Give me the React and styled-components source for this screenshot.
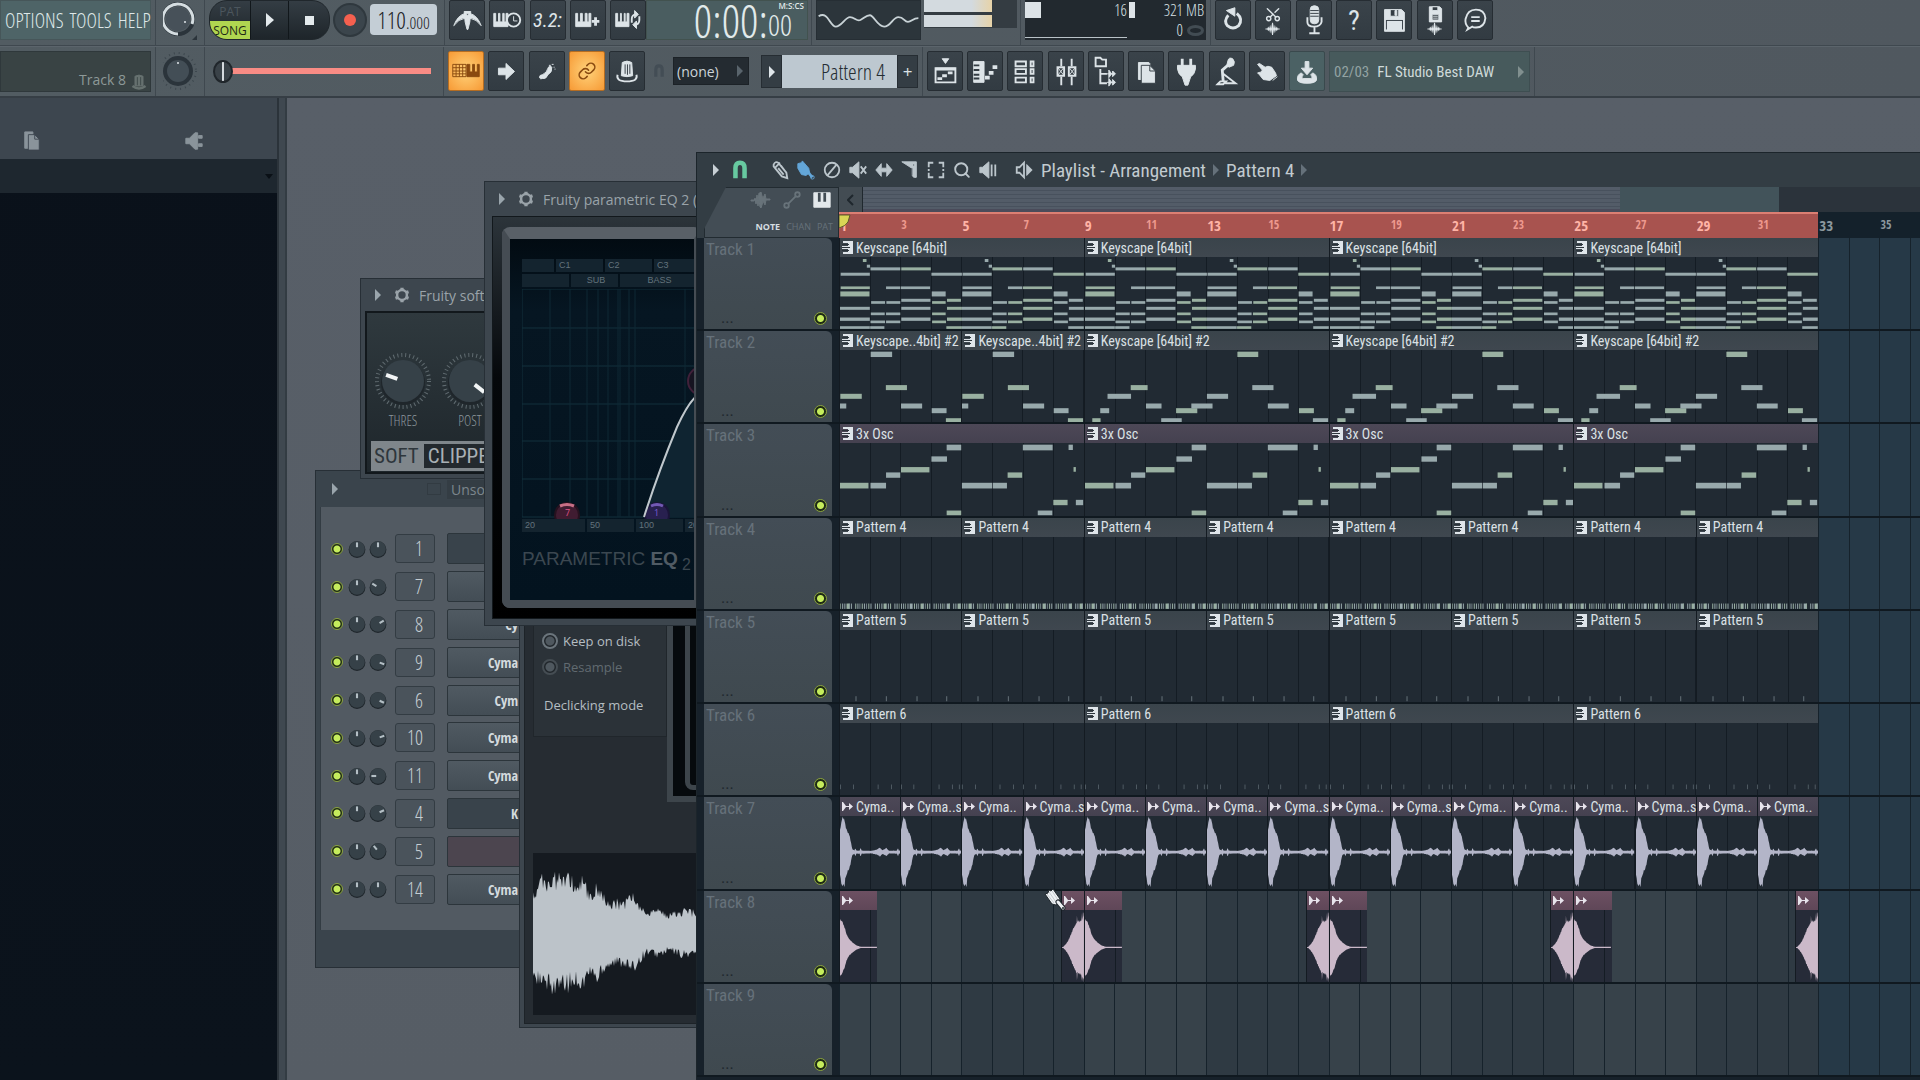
import styled, { createGlobalStyle, css } from "styled-components"
import { Link, Scissors, Search } from "lucide-react"

const LIGHT = `"Open Sans Condensed Light", "Roboto Condensed", "Open Sans Condensed", sans-serif`
const CONDENSED = `"Noto Sans Condensed", "Roboto Condensed", "Open Sans Condensed", sans-serif`
const BOLD = `"Open Sans Condensed", "Noto Sans", sans-serif`
const SANS = `"Open Sans", "Noto Sans", sans-serif`

/* ---------- data ---------- */

// notes are [x, y, width, height], one bar is 92 units wide and a clip is 216 high
const chords = [
    [69, 6, 11, 9], [81, 23, 10, 9],
    [92, 31, 90, 9], [185, 31, 89, 9],
    [2, 47, 88, 9], [276, 47, 92, 9],
    [2, 88, 88, 8], [139, 88, 43, 8], [184, 88, 88, 8],
    [1, 103, 88, 15], [277, 103, 42, 15],
    [185, 125, 88, 9], [323, 125, 42, 9],
    [94, 132, 42, 8], [140, 132, 42, 8], [278, 132, 41, 8],
    [0, 149, 90, 9], [185, 149, 88, 9], [323, 149, 45, 9],
    [93, 166, 42, 8], [139, 166, 43, 8], [278, 166, 41, 8],
    [0, 181, 90, 10], [185, 181, 88, 10], [323, 181, 45, 10],
    [92, 190, 44, 8], [139, 190, 43, 8], [278, 190, 42, 8],
    [0, 207, 90, 8], [91, 207, 43, 8], [321, 207, 47, 8],
]
const shift = (notes, by) => notes.map(([x, y, w, h]) => [x + by, y, w, h])
const chords8 = [...chords, ...shift(chords, 368)]

const melody = [
    [1, 131, 65, 15], [0, 160, 19, 15], [93, 5, 65, 16], [139, 105, 64, 15],
    [185, 160, 64, 15], [278, 174, 45, 15], [321, 204, 46, 12],
]
const melody8 = [
    [22, 204, 25, 12], [46, 174, 27, 15], [68, 131, 71, 15], [138, 105, 51, 15],
    [184, 160, 47, 15], [230, 204, 62, 12], [275, 174, 64, 15], [321, 160, 64, 15],
    [368, 131, 64, 15], [460, 5, 63, 16], [505, 105, 64, 15], [552, 160, 63, 15],
    [646, 174, 45, 15], [688, 204, 46, 12],
]
const bass8 = [
    [0, 119, 86, 17], [92, 119, 47, 17], [139, 88, 43, 16], [184, 72, 86, 16],
    [276, 40, 47, 16], [322, 5, 44, 17], [322, 202, 44, 14],
    [368, 119, 91, 17], [461, 119, 43, 17], [506, 88, 44, 16], [552, 5, 90, 17],
    [597, 202, 44, 14], [644, 170, 43, 16], [712, 170, 22, 16], [690, 5, 13, 16], [705, 72, 7, 14],
]
const hats = Array.from({ length: 56 }, (_, i) => [
    i * 6.6, 199, i % 17 === 3 || i % 17 === 15 ? 9 : i % 3 === 0 ? 2 : 3, 16,
]).filter((_, i) => i % 9 !== 6)
const claps = [47, 139, 232, 322].map((x) => [x, 198, 3, 15])
const kicks = [0, 40, 114, 155, 185, 222, 298, 338, 359].map((x) => [x, 184, 2, 14])
const kicks8 = [...kicks, ...shift(kicks, 368)]

const repeat = (count, make) => Array.from({ length: count }, (_, i) => make(i))
const longNames = [1, 3, 7, 9, 13]

const tracks = [
    { name: "Track 1", clips: repeat(4, (i) => ({ start: i * 8, bars: 8, label: "Keyscape [64bit]", notes: chords8 })) },
    {
        name: "Track 2",
        clips: [
            { start: 0, bars: 4, label: "Keyscape..4bit] #2", notes: melody },
            { start: 4, bars: 4, label: "Keyscape..4bit] #2", notes: melody },
            ...repeat(3, (i) => ({ start: 8 + i * 8, bars: 8, label: "Keyscape [64bit] #2", notes: melody8 })),
        ],
    },
    { name: "Track 3", clips: repeat(4, (i) => ({ start: i * 8, bars: 8, label: "3x Osc", tone: "violet", notes: bass8 })) },
    { name: "Track 4", clips: repeat(8, (i) => ({ start: i * 4, bars: 4, label: "Pattern 4", notes: hats })) },
    { name: "Track 5", clips: repeat(8, (i) => ({ start: i * 4, bars: 4, label: "Pattern 5", dim: true, notes: claps })) },
    { name: "Track 6", clips: repeat(4, (i) => ({ start: i * 8, bars: 8, label: "Pattern 6", dim: true, notes: kicks8 })) },
    {
        name: "Track 7",
        clips: repeat(16, (i) => ({ start: i * 2, bars: 2, label: longNames.includes(i) ? "Cyma..s" : "Cyma..", tone: "violet", wave: "kick" })),
    },
    {
        name: "Track 8",
        clips: [
            { start: 0, bars: 1.25, tone: "rose", wave: "fall" },
            ...[8, 16, 24].flatMap((bar) => [
                { start: bar - 0.75, bars: 0.75, tone: "rose", wave: "rise" },
                { start: bar, bars: 1.25, tone: "rose", wave: "fall" },
            ]),
            { start: 31.25, bars: 0.75, tone: "rose", wave: "rise" },
        ],
    },
    { name: "Track 9", clips: [] },
]

const channels = [
    { no: 1, pan: 0, name: "", tone: "#39434b" },
    { no: 7, pan: -60, name: "" },
    { no: 8, pan: 60, name: "Cy" },
    { no: 9, pan: 110, name: "Cyma" },
    { no: 6, pan: 115, name: "Cym" },
    { no: 10, pan: 70, name: "Cyma" },
    { no: 11, pan: -90, name: "Cyma" },
    { no: 4, pan: 65, name: "K", tone: "#39434b" },
    { no: 5, pan: -40, name: "", tone: "#4c454f" },
    { no: 14, pan: 0, name: "Cyma" },
]

/* ---------- wave forms ---------- */

// cheap repeatable noise, 0..1
const noise = (i) => {
    const n = Math.sin(i * 127.1) * 43758.5453
    return n - Math.floor(n)
}
const level = (points, x) => {
    const i = points.findIndex((p) => p[0] >= x)
    if (i <= 0) return points[0][1]
    const [x0, y0] = points[i - 1]
    const [x1, y1] = points[i]
    return y0 + ((y1 - y0) * (x - x0)) / (x1 - x0)
}
const wavePath = (points, middle, rough, step = 2) => {
    const end = points[points.length - 1][0]
    const top = []
    const bottom = []
    for (let x = 0; x <= end; x += step) {
        const l = level(points, x)
        top.push(`${x},${(middle - l * (1 - rough * noise(x + 1))).toFixed(1)}`)
        bottom.unshift(`${x},${(middle + l * (1 - rough * noise(x + 50))).toFixed(1)}`)
    }
    return `M${top.join("L")}L${bottom.join("L")}Z`
}

const waves = {
    kick: wavePath([[0, 70], [4, 96], [8, 110], [14, 108], [17, 84], [22, 64], [29, 54], [33, 34], [37, 10], [44, 5], [47, 14], [50, 5], [60, 5], [63, 16], [66, 5], [96, 4], [112, 8], [122, 14], [130, 6], [142, 13], [150, 4], [174, 5], [177, 14], [180, 5], [184, 5]], 108, 0.15),
    fall: wavePath([[0, 88], [8, 78], [16, 58], [20, 40], [28, 26], [38, 16], [50, 7], [64, 2], [115, 2]], 112, 0.08),
    rise: wavePath([[0, 1], [4, 2], [10, 8], [20, 22], [30, 46], [38, 64], [45, 78], [46, 78], [47, 100], [49, 80], [58, 86], [61, 88], [63, 108], [65, 92], [69, 108]], 112, 0.12, 1),
    sample: wavePath([[0, 46], [8, 60], [28, 64], [40, 58], [44, 54], [49, 62], [55, 48], [62, 46], [64, 62], [67, 44], [76, 36], [92, 34], [99, 44], [106, 32], [114, 22], [126, 26], [136, 20], [150, 26], [164, 23]], 80, 0.35, 1),
}

/* ---------- icons ---------- */

const Keys = ({ x, w = 16 }) => (
    <path d={`M${x} 13h2v9h3v-9h${w / 2 - 6}v9h3v-9h${w / 2 - 6}v9h2v-9h2v14h-${w}z`} fill="currentColor" />
)
const WaveMark = ({ y }) => (
    <path d={`M10 ${y}h2l1-2 1 2 1-4 1 4 1-6h1l1 6 1-4 1 4 1-2 1 2h2v1h-2l-1 2-1-2-1 4-1-4-1 6h-1l-1-6-1 4-1-4-1 2-1-2h-2z`} fill="currentColor" strokeWidth="0" />
)

const icons = {
    metronome: <><path d="M15 11h7l-1 11-2 8h-1l-2-8z" fill="currentColor" /><path d="M16 13Q8 15 4 26q5-7 12-8zM21 13q8 2 12 13-5-7-12-8z" fill="currentColor" /><circle cx="18.500" cy="14" r="1" fill="#333c43" /></>,
    wait: <><Keys x={4} w={15} /><circle cx="25" cy="20" r="7" fill="#333c43" stroke="currentColor" strokeWidth="2" /><path d="M25 16v5h4" /></>,
    overlay: <><Keys x={5} /><path d="M26 17v9M22 21.500h8" strokeWidth="3" /></>,
    loop: <><Keys x={5} w={14} /><path d="M22 23v-4q0-5 5-5M30 16v4q0 5-5 5" strokeWidth="2" /><path d="M25 10l4 4-4 4zM27 21l-4 4 4 4z" fill="currentColor" /></>,
    typing: <><path d="M4 13h14v13H4z" /><path d="M4 16.500h14M4 20h14M4 23h14M7.500 13v13M11 13v13M14.500 13v13" strokeWidth="1" /><path d="M19 13h3v8h3v-8h2v8h3v-8h2v13H19z" fill="currentColor" /></>,
    arrow: <path d="M10 17h8v-5l9 8.500-9 8.500v-5h-8z" fill="currentColor" />,
    foot: <path d="M10 27q0-3 3-3 5-2 6-7 2-4 4-1 1 5-4 8-2 5-6 4-2 1-3-1zM20 14h2M23 13h2M25 16h1M26 18h1" fill="currentColor" />,
    link: <Link x="8" y="10" width="20" height="20" strokeWidth={2} />,
    hat: <><path d="M13 11q5-3 10 0l1 14q-6 2-12 0z" fill="currentColor" /><path d="M16 13v10M18.500 13v11M21 13v10" stroke="#333c43" /><path d="M8 24q-2 7 10 7t10-7" strokeWidth="2" /></>,
    undo: <><path d="M13 15q-5 6-1 11 6 5 12 0 5-7-2-13" strokeWidth="3" /><path d="M11 10l9-3v9z" fill="currentColor" /></>,
    cut: <><Scissors x="9" y="5" width="18" height="18" transform="rotate(-90 18 14)" strokeWidth={2} /><WaveMark y={29} /></>,
    mic: <><rect x="14" y="5" width="9" height="19" rx="4" fill="currentColor" /><path d="M14 10h9M14 13h9M14 16h9" stroke="#333c43" /><path d="M11 17v5q0 5 7 5t8-5v-5M18.500 27v6M13 34h11" strokeWidth="2" /></>,
    save: <><path d="M8 9h18l3 3v20H8z" fill="currentColor" /><path d="M14 9h9v7h-9z" fill="#333c43" /><path d="M19 10h2v5h-2z" fill="currentColor" /><path d="M10 20v10M27 20v10M10 20.500h17" stroke="#333c43" /></>,
    saveAs: <><path d="M12 6h11l2 2v14H12z" fill="currentColor" /><path d="M15 6h6v4h-6zM15 14h7v6h-7z" fill="#333c43" /><path d="M16 16h5M16 18h5" /><WaveMark y={29} /></>,
    chat: <><path d="M11 28q-4-4-3-9 2-10 11-10t10 9q-1 10-10 10-3 0-4-1l-5 3z" strokeWidth="2" /><path d="M14 17h9M14 21h9" strokeWidth="2" /></>,
    playlist: <><path d="M15 7h7l-3.500 5z" fill="currentColor" /><path d="M8 17h21v15H8z" strokeWidth="2" /><path d="M8 18h21" strokeWidth="3" /><path d="M10 28h5M15 25h5M21 22h5" strokeWidth="3" /></>,
    pianoRoll: <><path d="M6 10h11v22H6z" fill="currentColor" /><path d="M6 14h6M6 19h6M6 24h6M6 28h6" stroke="#333c43" strokeWidth="2" /><path d="M18 27h5M22 22h5M26 16h5" strokeWidth="4" /></>,
    rack: <path d="M8 10h11v5H8zM8 18h11v5H8zM8 27h11v5H8zM24 10h3v5h-3zM24 18h3v5h-3zM24 27h3v5h-3z" strokeWidth="2" />,
    mixer: <><path d="M13 7v8M13 26v9M24 7v8M24 26v9" strokeWidth="2" /><path d="M9 16h7v9H9zM21 16h7v9h-7z" strokeWidth="2" /><path d="M9 16l7 9M16 16l-7 9M21 16l7 9M28 16l-7 9" /></>,
    browser: <><path d="M7 15V6h5l2 2h4v7zM12 18v15h7M12 23h7" strokeWidth="2" /><path d="M19 23h8M19 32h8" /><path d="M21 19l3 4-3 4zM25 20l3 3-3 3zM21 28l3 4-3 4zM25 29l3 3-3 3z" fill="currentColor" /></>,
    pages: <><path d="M10 11h11l1 1v17H10z" fill="currentColor" /><path d="M13 14h9l6 6v13H13z" fill="currentColor" stroke="#333c43" /><path d="M22 14v6h6" stroke="#333c43" /></>,
    plug: <><path d="M14 7v8M23 7v8" strokeWidth="3" /><path d="M9 14h19v4q-1 6-5 8l-1 3-2 6h-3l-2-6-1-3q-4-2-5-8z" fill="currentColor" /></>,
    arm: <><path d="M20 13l-7 6 1 12" strokeWidth="3" /><path d="M19 9q1-4 5-2 3 3 1 7l-5 2-2-3z" fill="currentColor" /><path d="M8 34l3-3h6l-3 3zM14 23l13 10H16" strokeWidth="2" /></>,
    hand: <path d="M8 13l2-1 6 4 3-1 4 1 4 6 1 3-7 5-7-1-4-5-2-2 4-1 1-2zM24 30l5-4" fill="currentColor" strokeWidth="1" />,
    download: <><path d="M16 10h4v7h4l-6 7-6-7h4z" fill="currentColor" /><path d="M12 22q-5 2-4 8 2 3 10 3t10-3q1-6-4-8l-2 2q3 3 0 4h-8q-3-1 0-4z" fill="currentColor" /></>,
}

const ToolIcon = ({ name }) => (
    <svg viewBox="0 0 36 40" width="34" height="38" fill="none" stroke="currentColor" aria-hidden="true">
        {icons[name]}
    </svg>
)

const Tool = ({ name, label, ...rest }) => (
    <ToolButton aria-label={label} {...rest}>
        <ToolIcon name={name} />
    </ToolButton>
)

const smallIcons = {
    magnet: <path d="M5 20V9q0-6 5-6t5 6v11M5 17v3M15 17v3" strokeWidth="5" />,
    pencil: <path d="M3 5q2-4 5-2l9 11 1 6-6-2L3 7zM5 8l5-5M8 9l6 7M11 6l6 8" strokeWidth="2" />,
    brush: <><path d="M1 4l4-1 1-2 7 8 1 5-4 3-5-1-4-7z" fill="currentColor" /><path d="M12 13l5 6" strokeWidth="3" /><circle cx="17" cy="19" r="2" /></>,
    erase: <><circle cx="10" cy="11" r="8" strokeWidth="2" /><path d="M15 5L5 17" strokeWidth="2" /></>,
    mute: <><path d="M1 8h3l7-6v18l-7-6H1z" fill="currentColor" /><path d="M13 7l6 8M19 7l-6 8" strokeWidth="2" /></>,
    slip: <path d="M1 11l6-7v5h6V4l6 7-6 7v-5H7v5z" fill="currentColor" />,
    slice: <><path d="M1 2h16v17q-4 1-5-3V9z" fill="currentColor" /><path d="M12 9v8M14 5v1" stroke="#333d44" /></>,
    select: <path d="M2 8V3h5M13 3h5v5M18 14v5h-5M7 19H2v-5M2 10v2M18 10v2" strokeWidth="2" />,
    zoom: <Search x="0" y="1" width="20" height="20" strokeWidth={2.500} />,
    play: <><path d="M1 8h3l7-6v18l-7-6H1z" fill="currentColor" /><path d="M14 5v13M18 5v13" strokeWidth="2" /></>,
    speaker: <><path d="M2 8h3l5-5v16l-5-5H2z" strokeWidth="2" /><path d="M13 5l6 6-6 6z" fill="currentColor" /></>,
    wave: <path d="M0 11h3l1-3 1 3 1-6 1 6 1-8h1l1-1 1 4 1 2 2-4 1 5h4v1h-4l-1 5-2-4-1 4-1 3-1-1H9l-1-7-1 6-1-6-1 4-1-4H0z" fill="currentColor" />,
    automation: <><circle cx="4" cy="17" r="2.500" strokeWidth="2" /><circle cx="16" cy="5" r="2.500" strokeWidth="2" /><path d="M6 15l8-8" strokeWidth="2" /></>,
    keys: <><path d="M1 3h18v16H1z" fill="currentColor" /><path d="M7 3v10M13 3v10" stroke="#434d55" strokeWidth="3" /></>,
    copy: <><path d="M2 1h9v18H2z" fill="currentColor" /><path d="M6 4h7l5 5v12H6z" fill="currentColor" stroke="#3d464f" /><path d="M13 4v5h5" stroke="#3d464f" /></>,
    plugSide: <path d="M1 8h4l6-6h3v18h-3l-6-6H1zM15 5h4v3h-4zM15 14h4v3h-4z" fill="currentColor" />,
    hat: <><path d="M5 4q5-3 10 0v12H5z" fill="currentColor" /><path d="M8 5v10M12 5v10" stroke="#394344" /><path d="M2 16q8 6 16 0" strokeWidth="3" /></>,
    gear: <><circle cx="10" cy="11" r="6" strokeWidth="3" /><path d="M10 2v3M10 17v3M2 7l3 1M15 14l3 1M2 15l3-1M15 8l3-1" strokeWidth="4" /></>,
}

const SmallIcon = ({ name, size = 20, color }) => (
    <svg viewBox="0 0 20 22" width={size} height={size} color={color} fill="none" stroke="currentColor" strokeWidth="1" aria-hidden="true">
        {smallIcons[name]}
    </svg>
)

const Arrow = ({ color = "#9aa5ac" }) => (
    <svg viewBox="0 0 6 12" width="6" height="12" fill={color} aria-hidden="true">
        <path d="M0 0l6 6-6 6z" />
    </svg>
)

const PatternMark = () => (
    <svg viewBox="0 0 11 13" width="11" height="13" aria-hidden="true">
        <path d="M1 0h10v13H1v-2h5V8H0V5h6V2H1z" fill="#dfe5ea" />
        <path d="M0 3.500h7M0 6.500h8M0 9.500h7" stroke="#2b343b" />
    </svg>
)
const AudioMark = () => (
    <svg viewBox="0 0 11 9" width="11" height="9" aria-hidden="true">
        <path d="M0 0h1l3 4h3V1l4 3.500L7 8V5H4L1 9H0z" fill="#e8e4ec" />
    </svg>
)

/* ---------- small parts ---------- */

const Knob = ({ size = 18, angle = 0, ticks }) => (
    <svg viewBox="0 0 60 60" width={size} height={size} aria-hidden="true">
        {ticks && <circle cx="30" cy="30" r="26" fill="none" stroke="#606b70" strokeWidth="4" strokeDasharray="1 3" />}
        <circle cx="30" cy="32" r={ticks ? 22 : 28} fill="#1f262b" />
        <circle cx="30" cy="30" r={ticks ? 21 : 26} fill="#364148" />
        <path d={ticks ? "M30 12v12" : "M30 8v16"} stroke={ticks ? "#f2f5f6" : "#b4bfc5"} strokeWidth={ticks ? 4 : 7} transform={`rotate(${angle} 30 30)`} />
    </svg>
)

const Clip = ({ clip }) => {
    const width = clip.bars * 92
    return (
        <ClipBox $start={clip.start * 4} $span={clip.bars * 4}>
            <ClipHeader $tone={clip.tone}>
                {clip.wave ? <AudioMark /> : <PatternMark />}
                {clip.label && <span>{clip.label}</span>}
            </ClipHeader>
            <ClipBody $tone={clip.tone}>
                <svg viewBox={`0 0 ${width} 216`} preserveAspectRatio="none" aria-hidden="true">
                    {clip.notes?.map(([x, y, w, h], i) => (
                        <rect key={i} x={x} y={y} width={w} height={h} fill={clip.dim ? "#66727a" : i % 3 ? "#98a9ac" : "#99b0a1"} />
                    ))}
                    {clip.wave && <path d={waves[clip.wave]} fill={clip.tone === "rose" ? "#cbb9c9" : "#b3b5c8"} />}
                </svg>
            </ClipBody>
        </ClipBox>
    )
}

/* ---------- toolbar ---------- */

const Toolbar = () => (
    <Header>
        <Bar>
            <Section $pad="0 4px 0 0">
                <MenuBar>
                    <a href="#options">OPTIONS</a>
                    <a href="#tools">TOOLS</a>
                    <a href="#help">HELP</a>
                </MenuBar>
            </Section>
            <Section $pad="0 7px">
                <svg viewBox="0 0 34 40" width="34" height="40" aria-hidden="true">
                    <circle cx="15" cy="19" r="15" fill="none" stroke="#2b343b" strokeWidth="4" />
                    <circle cx="15" cy="19" r="12" fill="#475159" />
                    <path d="M15 34A15 15 0 1 1 29 24" fill="none" stroke="#d5dde1" strokeWidth="3" />
                    <circle cx="22" cy="22" r="1" fill="#dfe6ea" />
                    <path d="M34 35v5h-5z" fill="#2b343b" />
                </svg>
            </Section>
            <Section $pad="0 7px 0 4px" $gap={3}>
                <Transport>
                    <ModeSwitch>
                        <button>PAT</button>
                        <button aria-pressed="true">SONG</button>
                    </ModeSwitch>
                    <button aria-label="Play"><svg viewBox="0 0 8 14" width="8" height="14"><path d="M0 0l8 7-8 7z" fill="#e4eaed" /></svg></button>
                    <button aria-label="Stop"><svg viewBox="0 0 9 9" width="9" height="9"><path d="M0 0h9v9H0z" fill="#e4eaed" /></svg></button>
                </Transport>
                <Record aria-label="Record"><span /></Record>
                <Tempo>110<small>.000</small></Tempo>
            </Section>
            <Section $pad="0 3px 0 4px">
                <Tools $width={197}>
                    <Tool name="metronome" label="Metronome" />
                    <Tool name="wait" label="Wait for input" />
                    <ToolButton aria-label="Countdown"><Count>3.2:</Count></ToolButton>
                    <Tool name="overlay" label="Overdub" />
                    <Tool name="loop" label="Loop recording" />
                </Tools>
                <Clock>
                    <span>0:00:</span>
                    <div>
                        <sup>M:S:CS</sup>
                        <small>00</small>
                    </div>
                </Clock>
            </Section>
            <Section $pad="0 3px 0 4px" $gap={3}>
                <Scope viewBox="0 0 105 40" aria-hidden="true">
                    <path d="M0 16C10 10 12 27 18 27S28 17 33 17 40 22 44 20 50 15 54 15 62 27 69 27 78 17 84 17 90 22 94 22 99 18 105 18" fill="none" stroke="#c8d2d6" strokeWidth="2" />
                </Scope>
                <Meter><span /><span /></Meter>
            </Section>
            <Section $pad="0 4px">
                <Stats>
                    <div><Level /><b>16</b></div>
                    <div><Level $thin /><b>321 MB</b></div>
                    <div><hr /></div>
                    <div><b>0</b><Ring /></div>
                </Stats>
            </Section>
            <Section $pad="0 4px" $last>
                <Tools $width={278}>
                    <Tool name="undo" label="Undo" />
                    <Tool name="cut" label="Edit audio" />
                    <Tool name="mic" label="Record audio" />
                    <ToolButton aria-label="Help"><Question>?</Question></ToolButton>
                    <Tool name="save" label="Save" />
                    <Tool name="saveAs" label="Render" />
                    <Tool name="chat" label="Chat" />
                </Tools>
            </Section>
        </Bar>
        <Bar $lower>
            <Section $pad="0 4px 0 0">
                <Hint>Track 8 <SmallIcon name="hat" size={18} color="#66716f" /></Hint>
            </Section>
            <Section $pad="0 7px">
                <svg viewBox="0 0 34 40" width="34" height="40" aria-hidden="true">
                    <circle cx="15" cy="20" r="18" fill="none" stroke="#3d474e" strokeWidth="2" strokeDasharray="1 4" />
                    <circle cx="15" cy="20" r="15" fill="#2b343b" />
                    <circle cx="15" cy="20" r="11" fill="#434e56" />
                    <circle cx="15" cy="12" r="1" fill="#dfe6ea" />
                </svg>
            </Section>
            <Section $pad="0 7px 0 8px">
                <Slider type="range" aria-label="Main pitch" min="0" max="100" defaultValue="0" />
            </Section>
            <Section $pad="0 4px">
                <Tools $width={197}>
                    <Tool name="typing" label="Typing keyboard" $hot />
                    <Tool name="arrow" label="Auto scroll" />
                    <Tool name="foot" label="Step edit" />
                    <Tool name="link" label="Link controllers" $hot />
                    <Tool name="hat" label="Multilink" />
                </Tools>
                <Snap>
                    <SmallIcon name="magnet" size={14} color="#434d55" />
                    <label><select aria-label="Snap"><option>(none)</option></select><Arrow color="#59646c" /></label>
                </Snap>
                <PatternPicker>
                    <button aria-label="Pattern menu"><Arrow color="#dfe6ea" /></button>
                    <output>Pattern 4</output>
                    <button aria-label="Add pattern">+</button>
                </PatternPicker>
            </Section>
            <Section $pad="0 4px" $gap={4}>
                <Tools $width={398}>
                    <Tool name="playlist" label="Playlist" />
                    <Tool name="pianoRoll" label="Piano roll" />
                    <Tool name="rack" label="Channel rack" />
                    <Tool name="mixer" label="Mixer" />
                    <Tool name="browser" label="Browser" />
                    <Tool name="pages" label="Project picker" />
                    <Tool name="plug" label="Plugin picker" />
                    <Tool name="arm" label="Tempo tapper" />
                    <Tool name="hand" label="Touch controller" />
                    <Tool name="download" label="Downloads" $green />
                </Tools>
                <News href="#news"><span>02/03</span>FL Studio Best DAW<Arrow color="#81908f" /></News>
            </Section>
        </Bar>
    </Header>
)

/* ---------- windows ---------- */

const ChannelRack = () => (
    <RackWindow>
        <RackTitle>
            <Arrow />
            <i />
            <span>Unsor</span>
        </RackTitle>
        <RackRows>
            {channels.map((c) => (
                <RackRow key={c.no}>
                    <Led type="checkbox" defaultChecked aria-label={`Channel ${c.no} on`} $small />
                    <Knob size={18} />
                    <Knob size={18} angle={c.pan} />
                    <ChannelNo>{c.no}</ChannelNo>
                    <ChannelButton $tone={c.tone} aria-label={`Channel ${c.no}`}>{c.name}</ChannelButton>
                </RackRow>
            ))}
        </RackRows>
        <RackFoot />
    </RackWindow>
)

const SoftClipper = () => (
    <ClipperWindow>
        <WindowTitle $height={32}>
            <Arrow />
            <SmallIcon name="gear" size={18} />
            <span>Fruity soft</span>
        </WindowTitle>
        <ClipperBody>
            <Dials>
                <figure><Knob size={60} angle={-70} ticks /><figcaption>THRES</figcaption></figure>
                <figure><Knob size={60} angle={128} ticks /><figcaption>POST</figcaption></figure>
            </Dials>
            <ClipperLogo><span>SOFT</span><b>CLIPPER</b></ClipperLogo>
        </ClipperBody>
    </ClipperWindow>
)

const Equalizer = () => (
    <EqWindow>
        <WindowTitle $height={34}>
            <Arrow />
            <SmallIcon name="gear" size={18} />
            <span>Fruity parametric EQ 2 (</span>
        </WindowTitle>
        <EqBody>
            <EqScreen>
                <EqScale $columns="32px 47px 47px 60px"><span /><span>C1</span><span>C2</span><span>C3</span></EqScale>
                <EqScale $columns="47px 47px 76px" $center><span /><span>SUB</span><span>BASS</span></EqScale>
                <svg viewBox="0 0 180 230" width="180" height="230" aria-hidden="true">
                    <path d="M0 0h174v228H0M0 39h174M0 77h174M0 115h174M0 152h174M0 190h174M0 0v228" stroke="#12303d" fill="none" />
                    <path d="M28 0v228M48 0v228M65 0v228M76 0v228M86 0v228M96 0v228M98 0v228M107 0v228M113 0v228M163 0v228" stroke="#0f2935" />
                    <path d="M122 228Q156 120 180 104V228z" fill="#0f2431" />
                    <circle cx="180" cy="92" r="14" fill="#161421" stroke="#41213a" strokeWidth="2" />
                    <circle cx="45" cy="226" r="12" fill="#401c31" stroke="#26121f" strokeWidth="2" />
                    <circle cx="135" cy="226" r="12" fill="#28204f" stroke="#1a1538" strokeWidth="2" />
                    <path d="M38 217q7-3 14 0" stroke="#c76f86" strokeWidth="3" fill="none" />
                    <path d="M129 217q6-3 12 0" stroke="#7259b4" strokeWidth="3" fill="none" />
                    <text x="43" y="227" fill="#e0538b" fontSize="9">7</text>
                    <text x="132" y="227" fill="#7c5fd6" fontSize="9">1</text>
                    <path d="M122 228Q136 184 155 138 167 112 176 106" stroke="#c0c8cd" strokeWidth="2" fill="none" />
                </svg>
                <EqScale $columns="63px 47px 47px 50px"><span>20</span><span>50</span><span>100</span><span>20</span></EqScale>
                <EqLogo>PARAMETRIC <b>EQ</b><sub>2</sub></EqLogo>
            </EqScreen>
        </EqBody>
    </EqWindow>
)

const Sampler = () => (
    <SamplerWindow>
        <SamplerInner>
            <SamplerTop>
                <SamplerOptions>
                    <label><input type="radio" name="content" defaultChecked /> Keep on disk</label>
                    <label><input type="radio" name="content" disabled /> Resample</label>
                    <p>Declicking mode</p>
                </SamplerOptions>
                <HiddenFrame><span /></HiddenFrame>
            </SamplerTop>
            <SampleView viewBox="0 0 164 162" preserveAspectRatio="none" aria-hidden="true">
                <path d={waves.sample} fill="#bcc3c9" />
            </SampleView>
        </SamplerInner>
    </SamplerWindow>
)

const Playlist = () => (
    <PlaylistWindow>
        <PlaylistTitle>
            <Arrow color="#c8d0d5" />
            <PlaylistTools>
                <button aria-label="Snap"><SmallIcon name="magnet" color="#67c9a0" /></button>
                {["pencil", "brush", "erase", "mute", "slip", "slice", "select", "zoom", "play"].map((name) => (
                    <button key={name} aria-label={name}>
                        <SmallIcon name={name} color={name === "brush" ? "#63a6d8" : "#bcc6cc"} />
                    </button>
                ))}
            </PlaylistTools>
            <SmallIcon name="speaker" color="#bcc6cc" />
            <h1>Playlist - Arrangement</h1>
            <Arrow color="#65717a" />
            <h1>Pattern 4</h1>
            <Arrow color="#65717a" />
        </PlaylistTitle>
        <PlaylistTop>
            <Corner>
                <div>
                    <SmallIcon name="wave" size={22} color="#68737a" />
                    <SmallIcon name="automation" color="#68737a" />
                    <SmallIcon name="keys" color="#e3e8eb" />
                </div>
                <p><b>NOTE</b><span>CHAN</span><span>PAT</span></p>
            </Corner>
            <Rulers>
                <Overview>
                    <button aria-label="Scroll left">
                        <svg viewBox="0 0 7 12" width="7" height="12" fill="none" stroke="#1f272d" strokeWidth="2"><path d="M6 1L1 6l5 5" /></svg>
                    </button>
                    <Minimap />
                    <MinimapRest />
                </Overview>
                <Ruler>
                    <SongRange>
                        <Playhead viewBox="0 0 12 14" aria-hidden="true"><path d="M0 1h11l-2 7q-2 4-9 6z" fill="#d9d655" stroke="#5e5a2a" /></Playhead>
                        {repeat(16, (i) => <Mark key={i} $strong={i % 2 === 0}>{i * 2 + 1}</Mark>)}
                    </SongRange>
                    <Mark $strong $after>33</Mark>
                    <Mark $after>35</Mark>
                </Ruler>
            </Rulers>
        </PlaylistTop>
        <TrackList>
            {tracks.map((track) => (
                <TrackRow key={track.name}>
                    <TrackHead>
                        <span>{track.name}</span>
                        <small>...</small>
                        <Led type="checkbox" defaultChecked aria-label={`${track.name} on`} />
                    </TrackHead>
                    <Lane>
                        <Song>
                            {track.clips.map((clip) => <Clip key={clip.start} clip={clip} />)}
                        </Song>
                    </Lane>
                </TrackRow>
            ))}
        </TrackList>
        <BrushCursor viewBox="0 0 22 24" aria-hidden="true">
            <path d="M1 6l3-1 1-3 2 1 2-2 7 10-1 4-3 2-4-1z" fill="#eef1f4" stroke="#20272d" />
            <path d="M3 6l7 9M5 4l7 10M8 3l6 9" stroke="#c6cbd0" />
            <path d="M14 14l5 6" stroke="#20272d" strokeWidth="5" strokeLinecap="round" />
            <path d="M14 14l5 6" stroke="#eef1f4" strokeWidth="3" strokeLinecap="round" />
            <circle cx="19" cy="20" r="1" fill="#20272d" />
        </BrushCursor>
    </PlaylistWindow>
)

export default function App() {
    return (
        <Page>
            <GlobalStyle />
            <Toolbar />
            <Main>
                <Sidebar>
                    <SidebarTabs>
                        <SmallIcon name="copy" color="#8a949b" />
                        <SmallIcon name="plugSide" color="#8a949b" />
                    </SidebarTabs>
                    <SidebarHead>
                        <svg viewBox="0 0 8 5" width="8" height="5"><path d="M0 0h8L4 5z" fill="#0a1016" /></svg>
                    </SidebarHead>
                </Sidebar>
                <Splitter />
                <Workspace>
                    <ChannelRack />
                    <SoftClipper />
                    <Sampler />
                    <Equalizer />
                    <Playlist />
                </Workspace>
            </Main>
        </Page>
    )
}

/* ---------- styles ---------- */

const GlobalStyle = createGlobalStyle`
    * {
        box-sizing: border-box;
    }

    body {
        margin: 0;
        font-family: ${SANS};
        background: #565d65;
    }

    button {
        padding: 0;
        border: 0;
        background: none;
        color: inherit;
        font: inherit;
    }

    svg {
        display: block;
        flex: none;
    }
`

const Page = styled.div`
    --bar: calc(51vw / 32);
    display: flex;
    flex-direction: column;
    height: 100vh;
    overflow: hidden;
    color: #dbe2e6;
`

const Header = styled.header`
    background: linear-gradient(90deg, #525c62, #50585f);
    border-bottom: 2px solid #363e45;
`

const Bar = styled.div`
    display: flex;
    height: ${(p) => (p.$lower ? 50 : 46)}px;
    ${(p) => p.$lower && css`
        border-top: 1px solid #5b646b;
    `}
    border-bottom: ${(p) => (p.$lower ? 0 : 1)}px solid #3f484f;
`

const Section = styled.div`
    display: flex;
    align-items: flex-start;
    gap: ${(p) => p.$gap || 0}px;
    padding: ${(p) => p.$pad};
    border-right: ${(p) => (p.$last ? 0 : 1)}px solid #3f484f;

    ${Bar} + ${Bar} & {
        padding-top: 4px;
    }
`

const MenuBar = styled.nav`
    display: flex;
    align-items: center;
    gap: 6px;
    width: 151px;
    height: 40px;
    padding-left: 4px;
    background: #4e6467;
    border: 1px solid #465659;
    font: 300 20px ${LIGHT};

    a {
        color: #dfe8e8;
        text-decoration: none;
    }
`

const Transport = styled.div`
    display: grid;
    grid-template-columns: 40px 38px 41px;
    height: 40px;
    overflow: hidden;
    background: linear-gradient(#343d44, #1e252a);
    border: 1px solid #20272c;
    border-radius: 18px;

    > button {
        display: flex;
        align-items: center;
        justify-content: center;
        border-left: 1px solid #11171b;
    }
`

const ModeSwitch = styled.div`
    display: grid;
    grid-template-rows: 20px 18px;
    font: 12px ${SANS};

    button {
        color: #4c565d;
    }

    button[aria-pressed] {
        background: #b0d650;
        color: #1f2a16;
    }
`

const Record = styled.button`
    display: flex;
    align-items: center;
    justify-content: center;
    width: 34px;
    height: 34px;
    margin-top: 3px;
    border-radius: 50%;
    background: #3b454c;
    border: 2px solid #2f383e;

    span {
        width: 12px;
        height: 12px;
        border-radius: 50%;
        background: #f5604f;
    }
`

const Tempo = styled.output`
    display: flex;
    align-items: baseline;
    justify-content: center;
    width: 67px;
    height: 31px;
    margin-top: 4px;
    border-radius: 4px;
    background: #c4ced6;
    color: #1c2226;
    font: 24px/31px ${LIGHT};

    small {
        font-size: 17px;
    }
`

const Tools = styled.div`
    display: flex;
    justify-content: space-between;
    width: ${(p) => p.$width}px;
`

const ToolButton = styled.button`
    display: flex;
    align-items: center;
    justify-content: center;
    width: 36px;
    height: 40px;
    background: linear-gradient(#3a434a, #323b42);
    border: 1px solid #262d33;
    border-radius: 2px;
    color: #dde4e8;

    ${(p) => p.$hot && css`
        background: radial-gradient(#ffd27a, #f79a35);
        border-color: #b56d22;
        color: #8a4a10;
    `}

    ${(p) => p.$green && css`
        background: #4b6164;
        border-color: #3a494d;
    `}
`

const Count = styled.span`
    font: italic 20px ${CONDENSED};
`

const Question = styled.span`
    font: 28px ${CONDENSED};
`

const Clock = styled.div`
    display: flex;
    justify-content: flex-end;
    width: 162px;
    height: 40px;
    padding-right: 3px;
    background: #4a5d60;
    border: 1px solid #42524f;
    color: #e1eaea;

    span {
        font: 300 46px/38px ${LIGHT};
    }

    div {
        display: flex;
        flex-direction: column;
        width: 36px;
    }

    sup {
        text-align: right;
        font: 600 8px/10px ${SANS};
    }

    small {
        font: 300 30px/28px ${LIGHT};
    }
`

const Scope = styled.svg`
    width: 105px;
    height: 40px;
    background: #2c353b;
    border: 1px solid #262e34;
`

const Meter = styled.div`
    display: grid;
    align-content: start;
    gap: 3px;
    width: 93px;
    height: 28px;
    background: #343c42;

    span {
        width: 68px;
        height: 12px;
        background: linear-gradient(90deg, #d3dadf 70%, #e7d3a8);
    }
`

const Stats = styled.div`
    display: grid;
    grid-template-columns: 104px 77px;
    grid-template-rows: 20px 20px;
    width: 181px;
    background: #22292f;
    font: 16px ${LIGHT};

    div {
        display: flex;
        align-items: center;
        justify-content: flex-end;
        gap: 4px;
        padding-right: 2px;
    }

    b {
        font-weight: 400;
    }

    hr {
        flex: 1;
        align-self: flex-end;
        margin: 0 0 2px;
        border: 0;
        border-top: 1px solid #b9c2c7;
    }
`

const Level = styled.span`
    width: ${(p) => (p.$thin ? 6 : 16)}px;
    height: 16px;
    margin-right: auto;
    background: #dde3e7;
`

const Ring = styled.span`
    width: 17px;
    height: 11px;
    border: 3px solid #424c53;
    border-radius: 50%;
`

const Hint = styled.div`
    display: flex;
    align-items: flex-end;
    justify-content: flex-end;
    gap: 4px;
    width: 151px;
    height: 41px;
    padding: 0 2px 0;
    background: #394344;
    border: 1px solid #2f383b;
    color: #8d9998;
    font: 14px/22px ${SANS};
`

const Slider = styled.input`
    appearance: none;
    width: 218px;
    height: 40px;
    margin: 0 5px 0 0;
    background: linear-gradient(#f98c85, #f98c85) right / 200px 6px no-repeat;

    &::-webkit-slider-thumb {
        appearance: none;
        width: 20px;
        height: 23px;
        border: 2px solid #20262b;
        border-radius: 50%;
        background: linear-gradient(90deg, #3a4248 7px, #d5dade 7px 9px, #3a4248 9px);
    }
`

const Snap = styled.div`
    display: flex;
    align-items: center;
    gap: 7px;
    height: 40px;
    margin-left: 7px;

    label {
        display: flex;
        align-items: center;
        width: 76px;
        height: 28px;
        padding: 0 5px 0 3px;
        background: #242b31;
        border: 1px solid #1c2227;
    }

    select {
        flex: 1;
        min-width: 0;
        appearance: none;
        background: none;
        border: 0;
        color: #ccd4d9;
        font: 14px ${SANS};
    }
`

const PatternPicker = styled.div`
    display: grid;
    grid-template-columns: 21px 115px 21px;
    height: 33px;
    margin: 4px 0 0 12px;

    button {
        display: flex;
        align-items: center;
        justify-content: center;
        background: #343d44;
        border: 1px solid #262d33;
        font-size: 17px;
    }

    output {
        padding-right: 12px;
        background: #bdc8d0;
        color: #252d33;
        font: 22px/32px ${LIGHT};
        text-align: right;
    }
`

const News = styled.a`
    display: flex;
    align-items: center;
    width: 201px;
    height: 41px;
    padding: 0 5px 0 4px;
    background: #475a5c;
    border: 1px solid #3e4e51;
    color: #cfdada;
    font: 15px ${CONDENSED};
    text-decoration: none;

    span {
        margin-right: 8px;
        color: #93a3a3;
    }

    svg {
        margin-left: auto;
    }
`

const Main = styled.main`
    display: flex;
    flex: 1;
    min-height: 0;
`

const Sidebar = styled.aside`
    width: 277px;
    background: linear-gradient(#0a111a, #0b131c);
`

const SidebarTabs = styled.div`
    display: flex;
    align-items: center;
    justify-content: space-between;
    height: 61px;
    padding: 25px 73px 0 22px;
    background: #3d464f;
`

const SidebarHead = styled.div`
    display: flex;
    align-items: center;
    justify-content: flex-end;
    height: 34px;
    padding-right: 4px;
    background: #1e272f;
`

const Splitter = styled.div`
    width: 10px;
    background: #3f4850;
    border-left: 2px solid #2b333a;
    border-right: 2px solid #333c43;
`

const Workspace = styled.div`
    position: relative;
    flex: 1;
    overflow: hidden;
    background: linear-gradient(#585f68, #565d65);
`

const Window = styled.section`
    position: absolute;
    background: #3d464e;
    border: 1px solid #272f36;
`

const WindowTitle = styled.header`
    display: flex;
    align-items: center;
    gap: 12px;
    height: ${(p) => p.$height}px;
    padding-left: 14px;
    color: #9aa3a9;
    font: 14px ${SANS};
    white-space: nowrap;

    span {
        margin-left: -4px;
    }
`

const RackWindow = styled(Window)`
    left: 28px;
    top: 372px;
    width: 206px;
    background: #3a444c;
`

const RackTitle = styled.header`
    display: flex;
    align-items: center;
    height: 36px;
    padding-left: 16px;
    color: #7c868d;
    font: 14px ${SANS};

    i {
        width: 14px;
        height: 12px;
        margin: 0 6px 0 89px;
        border: 1px solid #323b42;
    }

    span {
        padding-left: 4px;
        background: #343d44;
    }
`

const RackRows = styled.div`
    display: flex;
    flex-direction: column;
    height: 423px;
    margin-left: 4px;
    padding: 23px 0 22px 10px;
    background: #525a62;
    border-left: 1px solid #333c43;
`

const RackRow = styled.div`
    display: grid;
    flex: 1;
    grid-template-columns: 14px 18px 18px 44px 86px;
    column-gap: 3px;
    align-items: center;

    > :nth-child(4) {
        margin-left: 5px;
    }

    > :nth-child(5) {
        margin-left: 10px;
    }
`

const ChannelNo = styled.output`
    width: 40px;
    height: 29px;
    padding-right: 11px;
    background: #4a535b;
    border: 1px solid #333c43;
    border-radius: 3px;
    color: #c5cdd2;
    font: 20px/27px ${LIGHT};
    text-align: right;
`

const ChannelButton = styled.button`
    height: 31px;
    padding-right: 4px;
    background: ${(p) => p.$tone || "linear-gradient(#505a62, #434d55)"};
    border: 1px solid #2c353b;
    border-radius: 2px;
    color: #d3dade;
    font: 14px ${BOLD};
    text-align: right;
`

const RackFoot = styled.footer`
    height: 37px;
`

const Led = styled.input`
    appearance: none;
    width: ${(p) => (p.$small ? 12 : 13)}px;
    height: ${(p) => (p.$small ? 12 : 13)}px;
    margin: 0;
    border: 1px solid #8aa33c;
    border-radius: 50%;
    background: radial-gradient(circle, #c5ec5c 0 3px, #1e2a16 4px);
`

const ClipperWindow = styled(Window)`
    left: 73px;
    top: 180px;
    width: 140px;
`

const ClipperBody = styled.div`
    height: 163px;
    margin: 0 0 4px 4px;
    padding: 38px 0 0 6px;
    overflow: hidden;
    background: linear-gradient(#2f393e, #1e262b);
    border: 1px solid #12181c;
    border-width: 2px 0 2px 2px;
`

const Dials = styled.div`
    display: flex;
    gap: 7px;

    figure {
        margin: 0;
        text-align: center;
    }

    figcaption {
        margin-top: 1px;
        color: #8b969c;
        font: 14px/18px ${LIGHT};
    }
`

const ClipperLogo = styled.div`
    display: flex;
    align-items: center;
    height: 30px;
    margin: 11px 0 0 -2px;
    padding-left: 3px;
    gap: 5px;
    background: #7f868b;
    font: 21px ${CONDENSED};
    color: #2e363c;

    b {
        padding: 0 4px;
        background: #23292e;
        color: #a9b0b5;
        font-weight: 400;
        line-height: 24px;
    }
`

const EqWindow = styled(Window)`
    left: 197px;
    top: 83px;
    width: 220px;
`

const EqBody = styled.div`
    height: 403px;
    margin: 0 0 6px 7px;
    padding: 10px 0 0 9px;
    background: linear-gradient(#2c343a, #05080b 40%, #000);
    border: 1px solid #12181c;
`

const EqScreen = styled.div`
    height: 381px;
    padding: 20px 0 0 12px;
    overflow: hidden;
    background: linear-gradient(#020b12, #061622 20%, #03131f);
    border: 8px solid #454c53;
    border-top: 12px solid #596067;
    border-radius: 8px;
`

const EqScale = styled.div`
    display: grid;
    grid-template-columns: ${(p) => p.$columns};
    gap: 2px;
    height: 13px;
    margin-bottom: 2px;
    font: 9px/13px "Liberation Sans", sans-serif;
    color: #63737c;

    span {
        padding-left: 3px;
        background: #14242f;
        text-align: ${(p) => (p.$center ? "center" : "left")};
    }
`

const EqLogo = styled.div`
    margin-top: 16px;
    color: #3b4750;
    font: 19px/22px "Liberation Sans", sans-serif;
    white-space: nowrap;

    b {
        color: #505b64;
    }

    sub {
        margin-left: 4px;
    }
`

const SamplerWindow = styled(Window)`
    left: 232px;
    top: 500px;
    width: 190px;
`

const SamplerInner = styled.div`
    height: 425px;
    margin: 0 0 3px 4px;
    padding: 0 0 0 8px;
    background: #262c32;
    border: 1px solid #1d2328;
`

const SamplerTop = styled.div`
    display: flex;
    height: 253px;
`

const SamplerOptions = styled.div`
    width: 138px;
    height: 137px;
    padding: 27px 0 0 8px;
    background: #2b3238;
    border: 1px solid #20262b;
    color: #b5bdc2;
    font: 13px ${SANS};

    label {
        display: flex;
        align-items: center;
        gap: 5px;
        height: 26px;
        white-space: nowrap;
    }

    label:has(:disabled) {
        color: #616a70;
    }

    input {
        appearance: none;
        width: 16px;
        height: 16px;
        margin: 0;
        border: 2px solid #6b757c;
        border-radius: 50%;
        background: radial-gradient(circle, #4f585f 0 4px, #20262b 5px);
    }

    input:disabled {
        border-color: #454d53;
    }

    p {
        margin: 16px 0 0 2px;
    }
`

const HiddenFrame = styled.div`
    width: 40px;
    height: 202px;
    padding-left: 12px;
    background: #060a0d;
    border: 6px solid #3d454b;

    span {
        display: block;
        height: 184px;
        border: 5px solid #3d454b;
        border-top: 0;
        border-radius: 0 0 0 8px;
    }
`

const SampleView = styled.svg`
    width: 164px;
    height: 162px;
    background: #151a20;
`

const PlaylistWindow = styled(Window)`
    display: flex;
    flex-direction: column;
    left: 409px;
    right: 0;
    top: 54px;
    bottom: 0;
    background: #333d44;
    border-color: #1c252b;
    border-right: 0;
    border-bottom: 0;
`

const PlaylistTitle = styled.header`
    display: flex;
    align-items: center;
    height: 34px;
    padding-left: 16px;
    gap: 7px;

    h1 {
        margin: 0;
        color: #c2cbd0;
        font: 19px ${CONDENSED};
    }
`

const PlaylistTools = styled.div`
    display: flex;
    gap: 6px;
    margin: 0 9px 0 4px;

    button:first-child {
        margin-right: 14px;
    }
`

const PlaylistTop = styled.div`
    display: flex;
    height: 51px;
`

const Corner = styled.div`
    width: 135px;
    margin-left: 7px;
    background: #434d55;
    border: 1px solid #222b31;
    clip-path: polygon(22px 0, 100% 0, 100% 100%, 0 100%, 0 42px);

    div {
        display: flex;
        justify-content: flex-end;
        gap: 10px;
        padding: 2px 6px 0 0;
    }

    p {
        display: flex;
        justify-content: flex-end;
        gap: 6px;
        margin: 9px 5px 0 0;
        color: #66717a;
        font: 9px/12px ${SANS};
    }

    b {
        color: #d5dce0;
    }
`

const Rulers = styled.div`
    display: flex;
    flex: 1;
    flex-direction: column;
    min-width: 0;
`

const Overview = styled.div`
    display: flex;
    height: 25px;
    background: #2b333b;

    button {
        display: flex;
        align-items: center;
        justify-content: center;
        width: 24px;
        background: #434c53;
        border-right: 1px solid #20282e;
    }
`

const Minimap = styled.div`
    flex: 0 0 757px;
    background: repeating-linear-gradient(#535c68 0 3px, #48515d 3px 4px);
    border-bottom: 3px solid #4a4b5a;
`

const MinimapRest = styled.div`
    flex: 0 0 159px;
    background: #42535a;
`

const Ruler = styled.div`
    display: flex;
    flex: 1;
    overflow: hidden;
    background: #14212b;
`

const SongRange = styled.div`
    position: relative;
    display: flex;
    flex: none;
    width: 51vw;
    background: #a8534f;
    border-top: 2px solid #dc7f73;
`

const Playhead = styled.svg`
    position: absolute;
    left: 0;
    top: 0;
    width: 12px;
    height: 14px;
`

const Mark = styled.span`
    flex: none;
    width: calc(var(--bar) * 2);
    padding: ${(p) => (p.$after ? 2 : 0)}px 0 0 1px;
    color: ${(p) => (p.$after ? "#8b979e" : p.$strong ? "#ffb3a6" : "#ee998e")};
    font: ${(p) => (p.$strong ? "15px/22px" : "12px/22px")} ${BOLD};
`

const TrackList = styled.div`
    display: flex;
    flex: 1;
    flex-direction: column;
    min-height: 0;
    padding-bottom: 3px;
    background: #17212a;
`

const TrackRow = styled.div`
    display: flex;
    flex: 1;
    min-height: 0;
    border-bottom: 2px solid #101920;
`

const TrackHead = styled.div`
    display: grid;
    grid-template-columns: 1fr auto;
    align-content: space-between;
    align-items: end;
    width: 128px;
    margin: 0 7px 0 7px;
    padding: 0 5px 4px 2px;
    background: linear-gradient(#434d56, #3f494f);
    border-radius: 0 6px 0 0;
    color: #66717a;
    font: 17px/22px ${CONDENSED};

    span {
        grid-column: 1 / 3;
    }

    small {
        padding-left: 15px;
        color: #20282e;
        font-size: 16px;
        line-height: 14px;
    }
`

const Lane = styled.div`
    flex: 1;
    min-width: 0;
    background:
        repeating-linear-gradient(90deg, #16222b 0 1px, transparent 1px var(--bar)),
        linear-gradient(90deg, transparent 51vw, #263947 51vw),
        repeating-linear-gradient(90deg, #37424a 0 calc(var(--bar) * 4), #2f3a43 calc(var(--bar) * 4) calc(var(--bar) * 8));
`

const Song = styled.div`
    display: grid;
    grid-template-columns: repeat(128, minmax(0, 1fr));
    grid-template-rows: 100%;
    width: 51vw;
    height: 100%;
`

const ClipBox = styled.div`
    display: flex;
    grid-row: 1;
    grid-column: ${(p) => p.$start + 1} / span ${(p) => p.$span};
    flex-direction: column;
    min-width: 0;
    border-left: 1px solid #141b22;
`

const headerTones = {
    violet: "linear-gradient(#4d4857, #454150)",
    rose: "linear-gradient(#6d5062, #5f4758)",
}

const ClipHeader = styled.div`
    display: flex;
    align-items: center;
    gap: 3px;
    height: 19px;
    padding-left: 2px;
    overflow: hidden;
    background: ${(p) => headerTones[p.$tone] || "linear-gradient(#3a444b, #3f474f)"};
    color: #dbe1e5;
    font: 14px/18px ${CONDENSED};
    white-space: nowrap;
`

const ClipBody = styled.div`
    flex: 1;
    min-height: 0;
    background:
        repeating-linear-gradient(90deg, transparent 0 calc(var(--bar) - 1px), #141c24 calc(var(--bar) - 1px) var(--bar)),
        ${(p) => (p.$tone === "rose" ? "#262b38" : "#212a33")};

    svg {
        width: 100%;
        height: 100%;
    }
`

const BrushCursor = styled.svg`
    position: absolute;
    left: 347px;
    top: 735px;
    width: 22px;
    height: 24px;
`
